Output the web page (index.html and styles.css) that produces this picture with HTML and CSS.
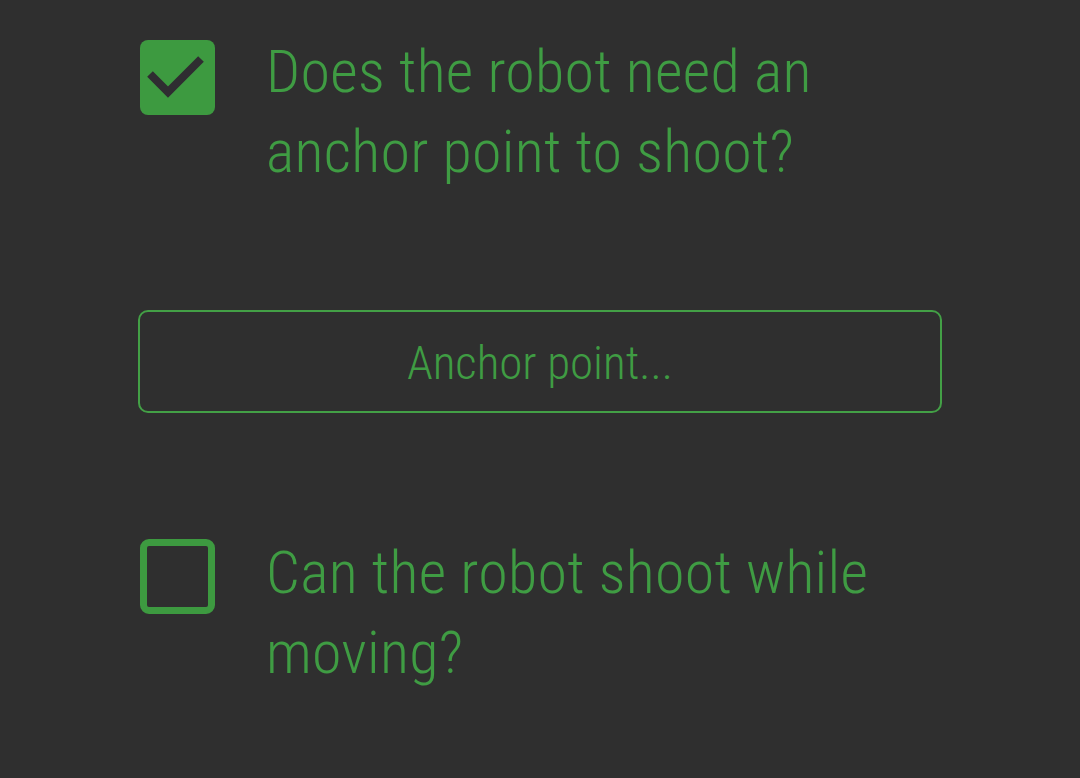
FILE: index.html
```html
<!DOCTYPE html>
<html lang="en">
<head>
<meta charset="utf-8">
<title>Shooting questions</title>
<link rel="stylesheet" href="styles.css">
</head>
<body>
<main class="form">
  <label class="question">
    <span class="box box-checked">
      <svg viewBox="0 0 75 75" width="75" height="75"><path d="M10 34 L28 52 L61 19" fill="none" stroke="#2f2d31" stroke-width="8" stroke-linejoin="miter"/></svg>
    </span>
    <span class="q-text">Does the robot need an anchor point to shoot?</span>
  </label>

  <div class="field">Anchor point...</div>

  <label class="question">
    <span class="box box-empty"></span>
    <span class="q-text">Can the robot shoot while moving?</span>
  </label>
</main>
</body>
</html>
```
FILE: styles.css
```css
html, body {
  margin: 0;
  padding: 0;
  background: #2f2f2f;
  height: 100%;
}
.form {
  width: 804px;
  padding: 32px 0 0 138px;
  display: flex;
  flex-direction: column;
  font-family: "Roboto Condensed", Roboto, sans-serif;
  font-weight: 300;
  color: #3f9c43;
}
.question {
  display: flex;
  align-items: flex-start;
  gap: 51px;
}
.box {
  flex: 0 0 auto;
  box-sizing: border-box;
  width: 75px;
  height: 75px;
  margin-top: 8px;
  margin-left: 2px;
  border-radius: 8px;
}
.box svg { display: block; }
.box-checked {
  background: #3d9a40;
}
.box-empty {
  border: 7px solid #3d9a40;
  border-radius: 9px;
  margin-top: 6px;
}
.q-text {
  font-size: 60px;
  line-height: 80px;
  letter-spacing: 0.3px;
  flex: 1;
}
.field {
  margin: 118px 0 120px;
  height: 103px;
  box-sizing: border-box;
  border: 2.5px solid #43a046;
  border-radius: 10px;
  display: flex;
  align-items: center;
  justify-content: center;
  font-size: 47px;
  padding-top: 2px;
}
```
